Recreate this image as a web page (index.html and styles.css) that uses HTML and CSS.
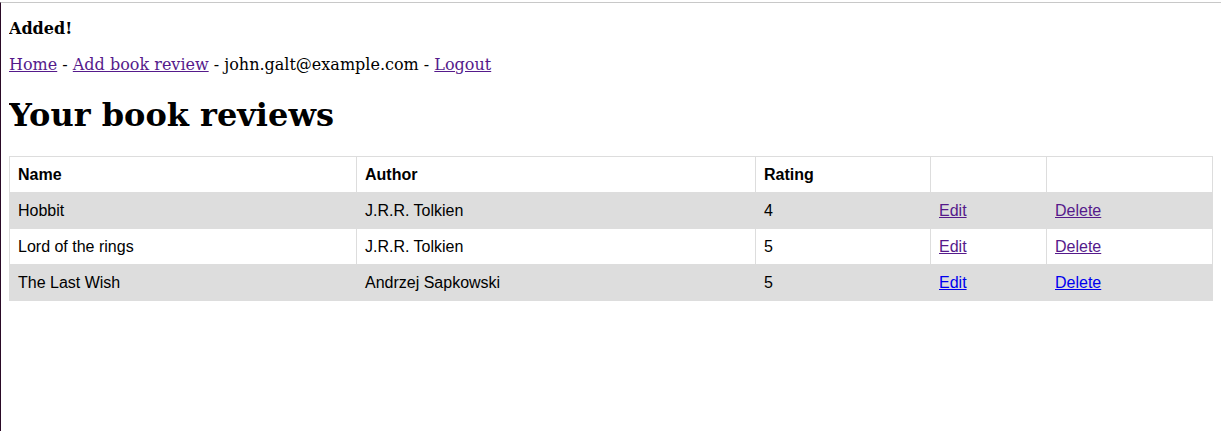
FILE: index.html
```html
<!DOCTYPE html>
<html>
<head>
<meta charset="utf-8">
<title>Your book reviews</title>
<link rel="stylesheet" href="styles.css">
</head>
<body>
<p class="flash">Added!</p>
<p class="nav"><a class="visited" href="#">Home</a> - <a class="visited" href="#">Add book review</a> - john.galt@example.com - <a class="visited" href="#">Logout</a></p>
<h1 class="title">Your book reviews</h1>
<table class="reviews">
<colgroup><col class="c-name"><col class="c-author"><col class="c-rating"><col class="c-edit"><col class="c-del"></colgroup>
<thead>
<tr><th>Name</th><th>Author</th><th>Rating</th><th></th><th></th></tr>
</thead>
<tbody>
<tr><td>Hobbit</td><td>J.R.R. Tolkien</td><td>4</td><td><a class="visited" href="#">Edit</a></td><td><a class="visited" href="#">Delete</a></td></tr>
<tr><td>Lord of the rings</td><td>J.R.R. Tolkien</td><td>5</td><td><a class="visited" href="#">Edit</a></td><td><a class="visited" href="#">Delete</a></td></tr>
<tr><td>The Last Wish</td><td>Andrzej Sapkowski</td><td>5</td><td><a class="link" href="#">Edit</a></td><td><a class="link" href="#">Delete</a></td></tr>
</tbody>
</table>
</body>
</html>
```
FILE: styles.css
```css
html {
  margin-top: 2px;
  border-top: 1px solid #c8c8c8;
  border-left: 1px solid #2a0a26;
  background: #fff;
  box-sizing: border-box;
  min-height: calc(100vh - 2px);
}
body {
  margin: 8px;
  font-family: "DejaVu Serif", serif;
  font-size: 16px;
  color: #000;
}
.flash {
  font-weight: bold;
  margin: 8px 0 17px;
}
.nav {
  margin: 17px 0;
}
.visited { color: #551a8b; }
.link { color: #0000ee; }
.title {
  font-size: 32px;
  font-weight: bold;
  margin: 22px 0;
}
.reviews {
  width: 100%;
  table-layout: fixed;
  border-collapse: collapse;
  font-family: "Liberation Sans", Arial, sans-serif;
  font-size: 16px;
}
.reviews th, .reviews td {
  border: 1px solid #ddd;
  padding: 8px;
  line-height: 19px;
  text-align: left;
}
.reviews th { font-weight: bold; }
.reviews tbody tr:nth-child(odd) { background: #ddd; }
.c-name { width: 347px; }
.c-author { width: 399px; }
.c-rating { width: 175px; }
.c-edit { width: 116px; }
```
